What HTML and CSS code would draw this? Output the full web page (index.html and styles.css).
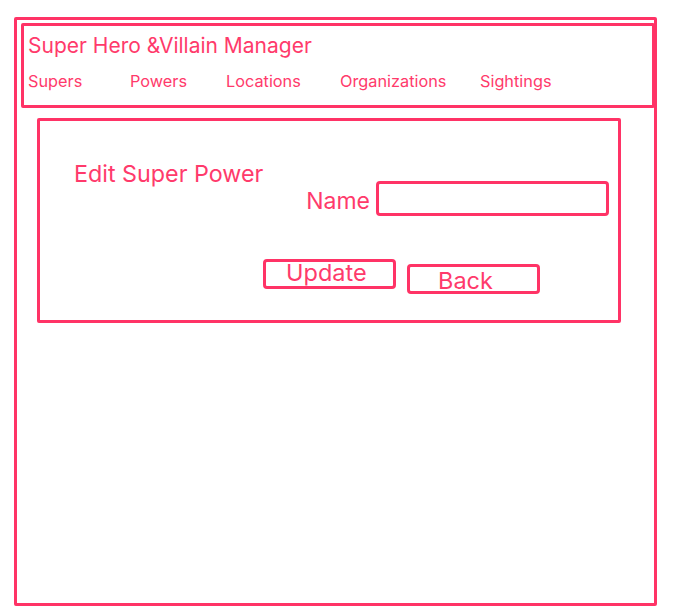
FILE: index.html
```html
<!DOCTYPE html>
<html>
<head>
<meta charset="utf-8">
<link rel="stylesheet" href="styles.css">
</head>
<body>
<div class="frame">
  <header class="header">
    <div class="title">Super Hero &amp;Villain Manager</div>
    <nav class="nav">
      <span>Supers</span>
      <span>Powers</span>
      <span>Locations</span>
      <span>Organizations</span>
      <span>Sightings</span>
    </nav>
  </header>
  <section class="card">
    <h1 class="heading">Edit Super Power</h1>
    <div class="form">
      <div class="field">
        <label class="label">Name</label>
        <div class="input"></div>
      </div>
      <div class="actions">
        <div class="btn btn-update">Update</div>
        <div class="btn btn-back">Back</div>
      </div>
    </div>
  </section>
</div>
</body>
</html>
```
FILE: styles.css
```css
* { box-sizing: border-box; }
body {
  margin: 0;
  background: #fff;
  font-family: Inter, "Noto Sans", sans-serif;
  color: #ff3a6b;
}
.frame {
  margin: 17px 18px 0 14px;
  height: 589px;
  border: 3px solid #ff3366;
  border-radius: 2px;
}
.header {
  margin: 3px -1px 0 4px;
  height: 85px;
  border: 3px solid #ff3366;
  border-radius: 2px;
  padding: 7px 0 0 4px;
}
.title {
  font-size: 21px;
  line-height: 26px;
}
.nav {
  display: grid;
  grid-template-columns: 102px 96px 114px 140px auto;
  margin-top: 12px;
  font-size: 16.3px;
  line-height: 20px;
}
.card {
  margin: 10px 0 0 20px;
  width: 584px;
  height: 205px;
  border: 3px solid #ff3366;
  border-radius: 2px;
  display: flex;
  padding: 0 9px 0 34px;
}
.heading {
  margin: 39px 0 0 0;
  font-size: 23.3px;
  line-height: 28px;
  font-weight: 400;
  width: 189px;
  flex: none;
  white-space: nowrap;
}
.form {
  flex: 1;
  padding-top: 60px;
}
.field {
  display: flex;
  align-items: center;
  justify-content: flex-end;
  gap: 6px;
}
.label {
  font-size: 23px;
  line-height: 28px;
  padding-top: 5px;
}
.input {
  width: 233px;
  height: 35px;
  border: 3px solid #ff3366;
  border-radius: 4px;
}
.actions {
  display: flex;
  align-items: flex-start;
  gap: 11px;
  margin-top: 43px;
}
.btn {
  width: 133px;
  border: 3px solid #ff3366;
  border-radius: 4px;
  font-size: 23.5px;
  line-height: 21px;
  white-space: nowrap;
}
.btn-update {
  height: 30px;
  padding-left: 20px;
}
.btn-back {
  height: 30px;
  margin-top: 5px;
  padding: 3px 0 0 28px;
}
```
